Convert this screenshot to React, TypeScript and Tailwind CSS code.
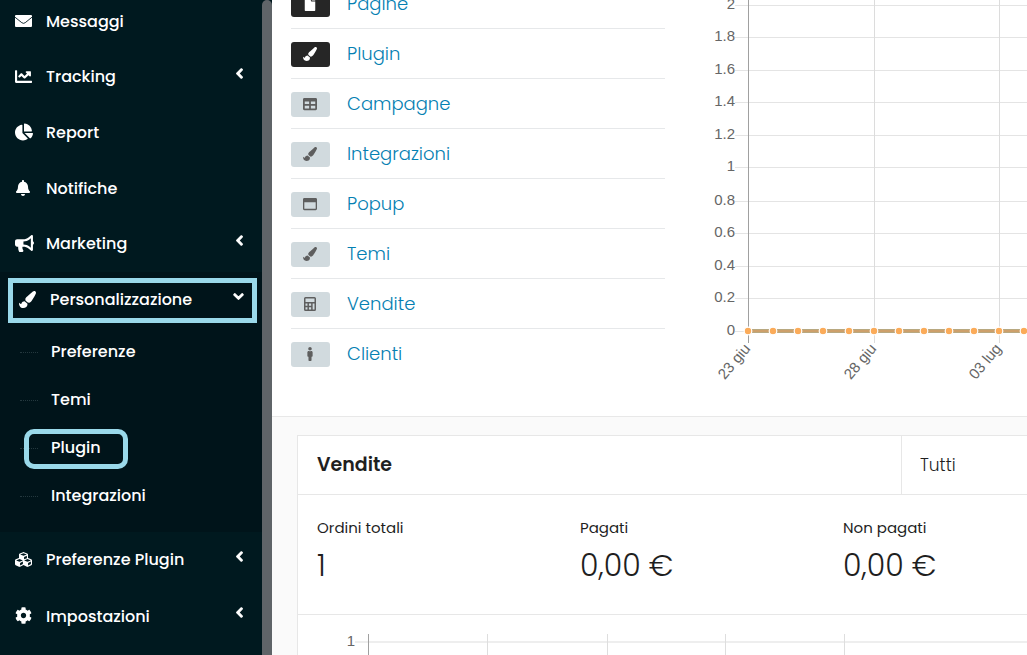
import type { ReactNode } from "react";
import {
  FaBell,
  FaBullhorn,
  FaChartLine,
  FaChartPie,
  FaChevronDown,
  FaChevronLeft,
  FaCog,
  FaCubes,
  FaFile,
  FaMale,
  FaPaintBrush,
  FaRegWindowMaximize,
  FaTable,
} from "react-icons/fa";

function EnvelopeIcon() {
  return (
    <svg width="17" height="12" viewBox="0 0 17 12" fill="none" aria-hidden="true">
      <rect width="17" height="12" rx="1" fill="currentColor" />
      <path d="M0 2.200 6.800 7.700Q8.500 9 10.200 7.700L17 2.200" stroke="#00191f" strokeWidth=".9" />
    </svg>
  );
}

function CalculatorIcon() {
  return (
    <svg width="12" height="14" viewBox="0 0 12 14" fill="none" stroke="currentColor" aria-hidden="true">
      <rect x=".75" y=".75" width="10.500" height="12.500" rx=".8" strokeWidth="1.500" />
      <path d="M1 5.800h10M1 9.500h7.500M4.200 6v7M7.900 6v7" strokeWidth="1.500" />
    </svg>
  );
}

type Item = { label: string; icon: ReactNode; expandable?: boolean };

const topItems: Item[] = [
  { label: "Messaggi", icon: <EnvelopeIcon /> },
  { label: "Tracking", icon: <FaChartLine size={17} />, expandable: true },
  { label: "Report", icon: <FaChartPie size={18} /> },
  { label: "Notifiche", icon: <FaBell size={16} /> },
  { label: "Marketing", icon: <FaBullhorn size={19} />, expandable: true },
];

const bottomItems: Item[] = [
  { label: "Preferenze Plugin", icon: <FaCubes size={17} />, expandable: true },
  { label: "Impostazioni", icon: <FaCog size={17} />, expandable: true },
];

const subItems = ["Preferenze", "Temi", "Plugin", "Integrazioni"];

function NavLink({ label, icon, expandable }: Item) {
  return (
    <li className="flex flex-1">
      <a href="#" className="flex flex-1 items-center pl-[15px] pr-[17px]">
        <span className="flex w-[31px] shrink-0 pb-0.5">{icon}</span>
        <span className="flex-1 whitespace-nowrap">{label}</span>
        {expandable && (
          <FaChevronLeft size={11} stroke="currentColor" strokeWidth={50} className="mb-2" />
        )}
      </a>
    </li>
  );
}

function Sidebar() {
  return (
    <aside className="flex w-[272px] shrink-0 bg-[#00191f] text-base font-medium text-white">
      <nav className="-mt-1.5 min-w-0 flex-1">
        <ul className="flex h-[278px] flex-col">
          {topItems.map((item) => (
            <NavLink key={item.label} {...item} />
          ))}
        </ul>
        <div className="bg-[#00141a] pb-3">
          <div className="flex h-14 items-center pl-2 pr-[5px]">
            <button
              type="button"
              aria-expanded="true"
              className="flex h-[45px] flex-1 items-center border-[5px] border-[#9ad9ea] pl-1.5 pr-2"
            >
              <FaPaintBrush size={17} className="mb-0.5 mr-3.5" />
              <span className="flex-1 text-left">Personalizzazione</span>
              <FaChevronDown size={11} stroke="currentColor" strokeWidth={50} className="mb-2" />
            </button>
          </div>
          <ul className="flex h-48 flex-col">
            {subItems.map((label) => (
              <li key={label} className="flex flex-1 items-center">
                <a href="#" className="relative flex items-center pl-5">
                  <span className="mr-[13px] w-[18px] border-t border-dotted border-[#24383e]" />
                  {label}
                  {label === "Plugin" && (
                    <span className="absolute -right-[27px] -top-[7px] left-6 h-10 rounded-[10px] border-[5px] border-[#9ad9ea]" />
                  )}
                </a>
              </li>
            ))}
          </ul>
        </div>
        <ul className="flex h-[113px] flex-col">
          {bottomItems.map((item) => (
            <NavLink key={item.label} {...item} />
          ))}
        </ul>
      </nav>
      <div className="w-2.5 rounded-t-full bg-[#5f6468]" />
    </aside>
  );
}

const features = [
  { label: "Pagine", icon: <FaFile size={14} />, dark: true },
  { label: "Plugin", icon: <FaPaintBrush size={14} />, dark: true },
  { label: "Campagne", icon: <FaTable size={14} />, dark: false },
  { label: "Integrazioni", icon: <FaPaintBrush size={14} />, dark: false },
  { label: "Popup", icon: <FaRegWindowMaximize size={14} />, dark: false },
  { label: "Temi", icon: <FaPaintBrush size={14} />, dark: false },
  { label: "Vendite", icon: <CalculatorIcon />, dark: false },
  { label: "Clienti", icon: <FaMale size={14} />, dark: false },
];

const yTicks = [
  { label: "2", y: 5 },
  { label: "1.8", y: 37 },
  { label: "1.6", y: 70 },
  { label: "1.4", y: 102 },
  { label: "1.2", y: 135 },
  { label: "1", y: 167 },
  { label: "0.8", y: 201 },
  { label: "0.6", y: 233 },
  { label: "0.4", y: 266 },
  { label: "0.2", y: 298 },
  { label: "0", y: 331 },
];
const xTicks = [
  { label: "23 giu", x: 43 },
  { label: "28 giu", x: 169 },
  { label: "03 lug", x: 294 },
];
const points = [43, 68, 93, 118, 144, 169, 194, 219, 244, 269, 294, 319];

function VisitsChart() {
  return (
    <svg
      className="h-[394px] w-full font-['Liberation_Sans',sans-serif] text-[15px]"
      role="img"
      aria-label="23 giu - 03 lug"
      fill="#666"
    >
      {yTicks.map(({ label, y }) => (
        <g key={label}>
          <rect x="30" y={y} width="100%" height="1" fill="#e4e4e4" />
          <text x="30" y={y + 4} textAnchor="end">
            {label}
          </text>
        </g>
      ))}
      {xTicks.map(({ label, x }, i) => (
        <g key={label}>
          <rect x={x} y="0" width="1" height="343" fill={i === 0 ? "#a0a0a0" : "#dcdcdc"} />
          <text transform={`translate(${x + 3} 349) rotate(-50)`} textAnchor="end">
            {label}
          </text>
        </g>
      ))}
      <rect x="43" y="329" width="100%" height="4" fill="#b8a880" />
      <rect x="43" y="330" width="100%" height="2" fill="#cda06b" />
      {points.map((x) => (
        <circle key={x} cx={x} cy="331" r="3.800" fill="#fbab59" stroke="#fff" strokeWidth="1.200" />
      ))}
    </svg>
  );
}

function SalesChart() {
  return (
    <svg
      className="h-[200px] w-full font-['Liberation_Sans',sans-serif] text-[15px]"
      role="img"
      aria-label="Vendite"
      fill="#666"
    >
      <rect x="57" y="26" width="100%" height="2" fill="#eee" />
      <text x="57" y="31" textAnchor="end">
        1
      </text>
      <rect x="70" y="19" width="1" height="100%" fill="#a0a0a0" />
      {[189, 309, 427, 546].map((x) => (
        <rect key={x} x={x} y="19" width="1" height="100%" fill="#dedede" />
      ))}
    </svg>
  );
}

const totals = [
  { label: "Ordini totali", value: "1" },
  { label: "Pagati", value: "0,00 €" },
  { label: "Non pagati", value: "0,00 €" },
];

export default function App() {
  return (
    <div className="flex h-screen overflow-hidden bg-[#fafafa] font-[Poppins,Inter,sans-serif] text-[#1f1f1f]">
      <Sidebar />
      <main className="min-w-0 flex-1">
        <section className="flex h-[417px] items-start border-b border-[#e8e8e8] bg-white pl-[19px]">
          <ul className="-mt-[21px] w-[374px] shrink-0 divide-y divide-[#e6e8ea]">
            {features.map(({ label, icon, dark }) => (
              <li key={label}>
                <a
                  href="#"
                  className="flex h-[49px] items-center gap-[17px] pt-px text-lg font-light text-[#0580b2]"
                >
                  <span
                    className={
                      dark
                        ? "flex h-[25px] w-[39px] items-center justify-center rounded-[3px] bg-[#262626] pr-px text-white"
                        : "flex h-[25px] w-[39px] items-center justify-center rounded-[3px] bg-[#d1dade] pr-px text-[#5e5e5e]"
                    }
                  >
                    {icon}
                  </span>
                  {label}
                </a>
              </li>
            ))}
          </ul>
          <div className="ml-10 min-w-0 flex-1">
            <VisitsChart />
          </div>
        </section>

        <section className="ml-[25px] mt-[18px] border-l border-t border-[#e7e7e7] bg-white">
          <header className="flex h-[59px] border-b border-[#e7e7e7]">
            <h2 className="flex flex-1 items-center pl-[19px] text-[19px] font-semibold">Vendite</h2>
            <select
              aria-label="Stato"
              className="w-[126px] appearance-none border-l border-[#e7e7e7] bg-white pl-[18px] pt-0.5 text-[17px] font-light"
            >
              <option>Tutti</option>
            </select>
          </header>
          <dl className="flex h-[120px] border-b border-[#e7e7e7] pl-[19px] pt-[22px]">
            {totals.map(({ label, value }) => (
              <div key={label} className="w-[263px] shrink-0">
                <dt className="text-[15px] leading-[22px]">{label}</dt>
                <dd className="mt-[9px] text-3xl font-light leading-9">{value}</dd>
              </div>
            ))}
          </dl>
          <SalesChart />
        </section>
      </main>
    </div>
  );
}
